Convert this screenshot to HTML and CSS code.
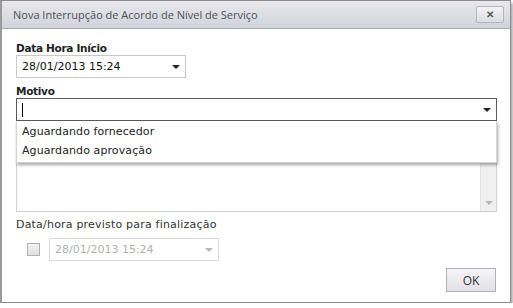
FILE: index.html
```html
<!DOCTYPE html>
<html lang="pt">
<head>
    <meta charset="UTF-8">
    <title>Nova Interrupção</title>
    <link rel="stylesheet" href="styles.css">
</head>
<body>
    <div class="dialog">
        <div class="title-bar">
            <span class="title">Nova Interrupção de Acordo de Nível de Serviço</span>
            <button class="close-btn">&#x2715;</button>
        </div>

        <div class="content">
            <label class="field-label">Data Hora Início</label>
            <div class="select date-select">
                <span>28/01/2013 15:24</span>
                <span class="arrow"></span>
            </div>

            <label class="field-label">Motivo</label>
            <div class="motivo">
                <div class="select motivo-input">
                    <span class="caret"></span>
                    <span class="arrow"></span>
                </div>
                <div class="textarea">
                    <div class="scrollbar"><span class="arrow light"></span></div>
                </div>
                <ul class="dropdown">
                    <li>Aguardando fornecedor</li>
                    <li>Aguardando aprovação</li>
                </ul>
            </div>

            <label class="plain-label">Data/hora previsto para finalização</label>
            <div class="end-row">
                <span class="checkbox"></span>
                <div class="select date-select disabled">
                    <span>28/01/2013 15:24</span>
                    <span class="arrow light"></span>
                </div>
            </div>

            <div class="actions">
                <button class="ok-btn">OK</button>
            </div>
        </div>
    </div>
</body>
</html>
```

FILE: styles.css
```css
* {
    box-sizing: border-box;
    padding: 0;
    margin: 0;
}

body {
    background: #ffffff;
    font-family: "DejaVu Sans", Verdana, sans-serif;
    font-size: 11px;
    color: #222;
}

.dialog {
    width: 511px;
    height: 303px;
    border: 1px solid #8c8c8c;
    border-left: 2px solid #9a9a9a;
    background: #fff;
    box-shadow: 2px 3px 3px rgba(0, 0, 0, 0.35);
}

.title-bar {
    height: 28px;
    display: flex;
    align-items: center;
    justify-content: space-between;
    padding: 0 6px 0 11px;
    background: linear-gradient(#e8e8ee, #d2d2da);
    border-bottom: 1px solid #a8a8b0;
}

.title {
    font-family: "Open Sans", sans-serif;
    font-size: 11px;
    color: #505058;
}

.close-btn {
    width: 28px;
    height: 17px;
    border: 1px solid #b4b4bc;
    border-radius: 2px;
    background: linear-gradient(#f4f4f6, #dcdce2);
    color: #555;
    font-size: 10px;
    font-weight: bold;
    line-height: 14px;
}

.content {
    padding: 12px 14px 0 14px;
}

.field-label {
    display: block;
    font-weight: bold;
    font-size: 10.5px;
    letter-spacing: -0.3px;
    color: #222;
    height: 14px;
    line-height: 14px;
}

.plain-label {
    display: block;
    color: #333;
    height: 14px;
    line-height: 14px;
    margin-top: 6px;
    letter-spacing: 0.2px;
}

.select {
    position: relative;
    height: 23px;
    border: 1px solid #c8c8c8;
    padding: 0 5px;
    line-height: 21px;
    color: #111;
    background: #fff;
}

.date-select {
    width: 170px;
    margin-bottom: 6px;
}

.arrow {
    position: absolute;
    right: 5px;
    top: 9px;
    border-left: 4px solid transparent;
    border-right: 4px solid transparent;
    border-top: 4px solid #222;
}

.arrow.light {
    border-top-color: #b8b8b8;
}

.motivo {
    position: relative;
    width: 481px;
}

.motivo-input {
    border-color: #5a5a5a;
}

.caret {
    display: inline-block;
    width: 1px;
    height: 14px;
    background: #000;
    vertical-align: middle;
}

.textarea {
    height: 91px;
    border: 1px solid #d0d0d0;
    border-top: none;
    display: flex;
    justify-content: flex-end;
}

.scrollbar {
    position: relative;
    width: 16px;
    background: #f0f0f0;
    border-left: 1px solid #e4e4e4;
}

.scrollbar .arrow {
    top: auto;
    bottom: 6px;
    right: 3px;
}

.dropdown {
    position: absolute;
    top: 23px;
    left: 0;
    right: 0;
    list-style: none;
    background: #fff;
    border: 1px solid #d4d4d4;
    border-top: none;
    box-shadow: 1px 2px 3px rgba(0, 0, 0, 0.35);
    padding: 1px 0 2px 0;
}

.dropdown li {
    padding-left: 5px;
    height: 19px;
    line-height: 19px;
    color: #222;
    letter-spacing: 0.1px;
}

.end-row {
    display: flex;
    align-items: center;
    gap: 9px;
    margin-top: 6px;
    padding-left: 11px;
}

.checkbox {
    width: 13px;
    height: 13px;
    border: 1px solid #b0b0b0;
    background: linear-gradient(#f2f2f2, #e0e0e0);
}

.end-row .date-select {
    margin-bottom: 0;
}

.disabled {
    color: #b0b0b0;
    border-color: #dadada;
}

.actions {
    display: flex;
    justify-content: flex-end;
    margin-top: 7px;
}

.ok-btn {
    width: 50px;
    height: 24px;
    border: 1px solid #b0b0b8;
    background: linear-gradient(#f6f6f8, #e0e0e6);
    font-family: "Open Sans", sans-serif;
    font-size: 12px;
    color: #333;
}
```
